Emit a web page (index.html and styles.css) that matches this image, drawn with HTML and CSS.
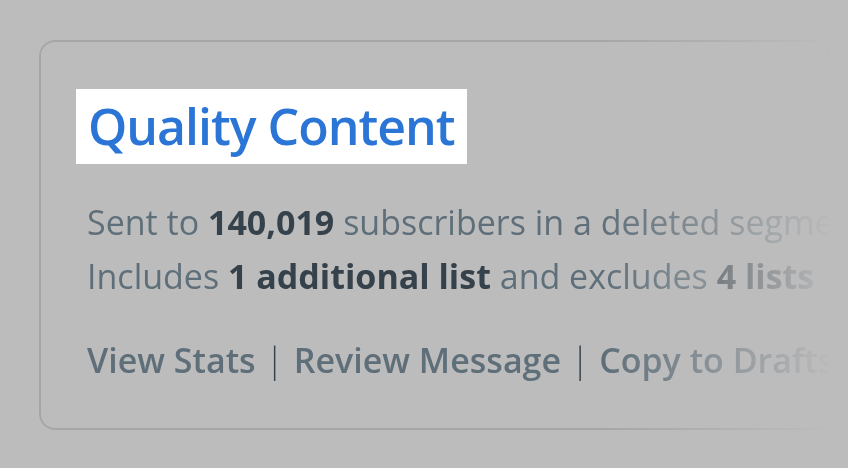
FILE: index.html
```html
<!DOCTYPE html>
<html lang="en">
<head>
    <meta charset="UTF-8">
    <meta name="viewport" content="width=device-width, initial-scale=1.0">
    <title>Campaign</title>
    <link rel="stylesheet" href="styles.css">
</head>
<body>
    <div class="campaign">
        <h1 class="campaign-title">Quality Content</h1>
        <p class="campaign-meta">
            Sent to <strong>140,019</strong> subscribers in a deleted segment<br>
            Includes <strong>1 additional list</strong> and excludes <strong>4 lists</strong>
        </p>
        <div class="campaign-links">
            <a href="#">View Stats</a>
            <span class="sep">|</span>
            <a href="#">Review Message</a>
            <span class="sep">|</span>
            <a href="#">Copy to Drafts</a>
        </div>
    </div>
</body>
</html>
```

FILE: styles.css
```css
body {
    margin: 0;
    background-color: #bcbcbc;
    font-family: "Open Sans", Lato, sans-serif;
    overflow: hidden;
}
.campaign {
    box-sizing: border-box;
    width: 791px;
    height: 390px;
    margin: 40px 0 0 39px;
    padding: 47px 0 0 46px;
    border: 2px solid #a6a6a8;
    border-radius: 16px;
    white-space: nowrap;
    overflow: hidden;
    -webkit-mask-image: linear-gradient(to right, #000 565px, transparent 795px);
    mask-image: linear-gradient(to right, #000 565px, transparent 795px);
}
.campaign-title {
    display: inline-block;
    margin: 0 0 0 -11px;
    padding: 0 12px;
    height: 75px;
    line-height: 75px;
    background-color: #fff;
    color: #2a75d5;
    font-size: 50px;
    font-weight: 600;
    letter-spacing: -1px;
}
.campaign-meta {
    margin: 31px 0 0;
    font-size: 34px;
    line-height: 54px;
    color: #5f6f7a;
}
.campaign-meta strong {
    color: #36424b;
    font-weight: 700;
}
.campaign-links {
    margin-top: 34px;
    font-size: 34px;
    color: #36424b;
}
.campaign-links a {
    color: #5f6f7a;
    font-weight: 600;
    text-decoration: none;
}
.sep {
    font-weight: 300;
    margin: 0 1px;
}
```
